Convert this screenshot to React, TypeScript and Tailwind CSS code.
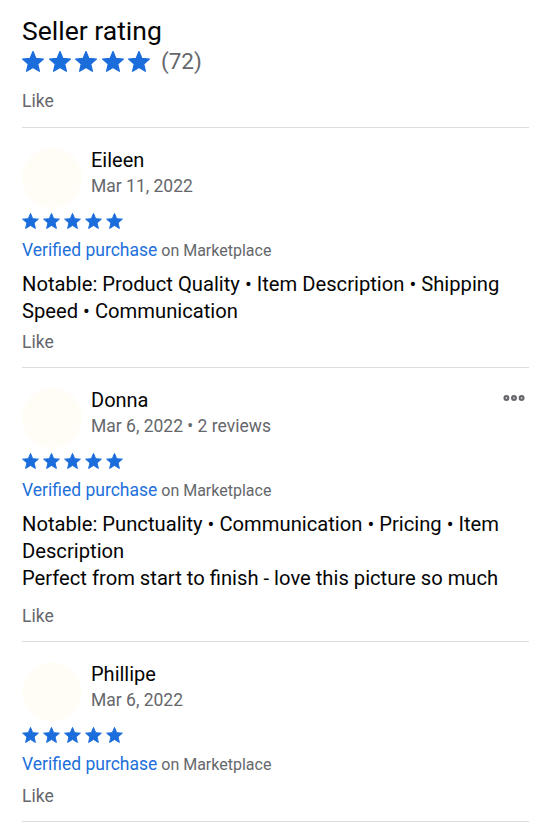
import { MoreHorizontal } from 'lucide-react';

interface Review {
  name: string;
  meta: string;
  lines: string[];
  likeClass: string;
  menu?: boolean;
}

const reviews: Review[] = [
  {
    name: 'Eileen',
    meta: 'Mar 11, 2022',
    lines: ['Notable: Product Quality • Item Description • Shipping Speed • Communication'],
    likeClass: 'mt-[7px]',
  },
  {
    name: 'Donna',
    meta: 'Mar 6, 2022 • 2 reviews',
    lines: [
      'Notable: Punctuality • Communication • Pricing • Item Description',
      'Perfect from start to finish - love this picture so much',
    ],
    likeClass: 'mt-[14px]',
    menu: true,
  },
  {
    name: 'Phillipe',
    meta: 'Mar 6, 2022',
    lines: [],
    likeClass: 'mt-[10px]',
  },
];

function Star({ className }: { className: string }) {
  return (
    <svg viewBox="1.5 1.5 21 20.2" className={className}>
      <path
        d="M12 17.27L18.18 21l-1.64-7.03L22 9.24l-7.19-.61L12 2 9.19 8.63 2 9.24l5.46 4.73L5.82 21z"
        fill="#1b6ddb"
        stroke="#1b6ddb"
        strokeWidth="1.2"
        strokeLinejoin="round"
      />
    </svg>
  );
}

function Stars({ size }: { size: 'lg' | 'sm' }) {
  return (
    <div className={size === 'lg' ? 'flex items-center gap-[4.5px]' : 'flex items-center gap-[4px]'}>
      {[0, 1, 2, 3, 4].map((i) => (
        <Star key={i} className={size === 'lg' ? 'w-[22px] h-[21px]' : 'w-[17px] h-[16px]'} />
      ))}
    </div>
  );
}

function ReviewItem({ review }: { review: Review }) {
  return (
    <div className="pt-[20px] pb-[15px] border-b border-[#dadde1]">
      <div className="relative flex items-start gap-[9px]">
        <div className="w-[60px] h-[60px] rounded-full bg-[#fffdf6] shrink-0" />
        <div>
          <p className="text-[20px] leading-[24px] text-[#050505]">{review.name}</p>
          <p className="mt-[3px] text-[17.5px] leading-[22px] text-[#65676b]">{review.meta}</p>
        </div>
        {review.menu && (
          <MoreHorizontal className="absolute right-[2px] top-[-3px] w-[26px] h-[26px] text-[#65676b]" strokeWidth={3.5} />
        )}
      </div>
      <div className="mt-[4px] h-[18px] flex items-center">
        <Stars size="sm" />
      </div>
      <p className="mt-[9px] text-[16px] leading-[22px] text-[#65676b]">
        <span className="text-[17.5px] text-[#216fdb]">Verified purchase</span> on Marketplace
      </p>
      {review.lines.length > 0 && (
        <div className="mt-[9px] text-[20.2px] leading-[27px] text-[#050505]">
          {review.lines.map((l) => (
            <p key={l}>{l}</p>
          ))}
        </div>
      )}
      <p className={`${review.likeClass} text-[17.5px] leading-[20px] text-[#65676b]`}>Like</p>
    </div>
  );
}

export default function App() {
  return (
    <div className="min-h-screen bg-white pl-[22px] pr-[21px] font-['Roboto','Liberation_Sans',sans-serif]">
      <div className="pt-[16px] pb-[16px] border-b border-[#dadde1]">
        <h1 className="text-[26.5px] leading-[30px] text-[#050505]">Seller rating</h1>
        <div className="mt-[3px] h-[24px] flex items-center gap-[11px]">
          <Stars size="lg" />
          <span className="text-[22.5px] leading-[24px] text-[#65676b]">(72)</span>
        </div>
        <p className="mt-[18px] text-[17.5px] leading-[20px] text-[#65676b]">Like</p>
      </div>
      {reviews.map((r) => (
        <ReviewItem key={r.name} review={r} />
      ))}
    </div>
  );
}
